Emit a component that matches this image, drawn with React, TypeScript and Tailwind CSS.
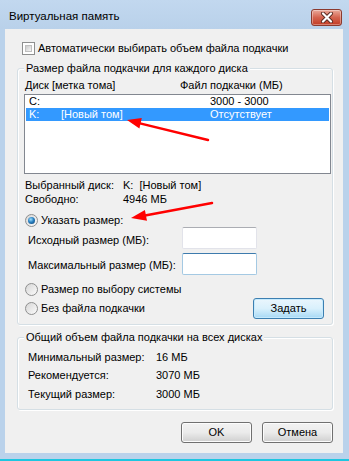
import React from "react";

function Radio({ checked }: { checked?: boolean }) {
  return (
    <span className="w-[13px] h-[13px] rounded-full border border-[#8e8f8f] bg-linear-to-br from-[#d6d6d6] to-[#fbfbfb] flex items-center justify-center shrink-0">
      {checked && (
        <span className="w-[7px] h-[7px] rounded-full bg-[radial-gradient(circle_at_40%_35%,#9fe0ff_0%,#2a80c0_45%,#0c3d6e_100%)]" />
      )}
    </span>
  );
}

function Checkbox() {
  return (
    <span className="w-[13px] h-[13px] border border-[#8e8f8f] bg-white p-[2px] shrink-0">
      <span className="block w-full h-full border border-[#c0c0c0] bg-linear-to-br from-[#cbcbcb] to-[#f6f6f6]" />
    </span>
  );
}

function Btn({ label, def }: { label: string; def?: boolean }) {
  return (
    <div
      className={
        "w-[71px] h-[21px] rounded-[3px] border flex items-center justify-center leading-none " +
        (def
          ? "border-[#3c7fb1] bg-linear-to-b from-[#eaf6fd] via-[#d9f0fc] to-[#a7d9f5] shadow-[inset_0_0_0_1px_#c6eafd]"
          : "border-[#707070] bg-linear-to-b from-[#f2f2f2] via-[#ebebeb] to-[#cfcfcf] shadow-[inset_0_0_0_1px_#fcfcfc]")
      }
    >
      {label}
    </div>
  );
}

function Input({ focused }: { focused?: boolean }) {
  return (
    <div
      className={
        "w-[75px] h-[22px] bg-white border rounded-[2px] " +
        (focused
          ? "border-[#a4c9e3] border-t-[#3d7bad]"
          : "border-[#e2e3ea] border-t-[#abadb3]")
      }
    />
  );
}

function CloseBtn() {
  return (
    <div className="mt-[9px] w-[31px] h-[17px] rounded-[3px] border border-[#8b3a2e] bg-linear-to-b from-[#e9a99b] via-[#d4634f] to-[#c23a22] flex items-center justify-center shadow-[inset_0_0_0_1px_rgba(255,255,255,0.35)]">
      <svg width="16" height="11" viewBox="0 0 16 11">
        <path d="M4 1.5 L12 9.5 M12 1.5 L4 9.5" stroke="#5a2a22" strokeWidth="4" strokeLinecap="round" />
        <path d="M4 1.5 L12 9.5 M12 1.5 L4 9.5" stroke="#ffffff" strokeWidth="2.2" strokeLinecap="round" />
      </svg>
    </div>
  );
}

function Group({
  title,
  className,
  children,
}: {
  title: string;
  className: string;
  children: React.ReactNode;
}) {
  return (
    <div
      className={
        "relative border border-[#d5dfe5] rounded-[3px] shadow-[inset_1px_1px_0_#ffffff,1px_1px_0_#ffffff] flex flex-col " +
        className
      }
    >
      <span className="absolute -top-[8px] left-[6px] px-[2px] bg-[#f0f0f0] leading-[14px]">
        {title}
      </span>
      {children}
    </div>
  );
}

export default function App() {
  return (
    <div className="relative w-[349px] h-[461px] bg-[#bad2eb] flex flex-col font-['Liberation_Sans',Arial,sans-serif] text-[11px] text-black overflow-hidden whitespace-nowrap">
      <div className="h-[29px] flex items-start justify-between pl-[9px] pr-[7px] bg-linear-to-b from-[#c2d8ef] to-[#b9d1ea]">
        <span className="mt-[8px] leading-[16px] text-[11.5px]">Виртуальная память</span>
        <CloseBtn />
      </div>

      <div className="ml-[5px] w-[338px] h-[424px] bg-[#f0f0f0] flex flex-col">
        <div className="mt-[12px] h-[14px] pl-[17px] flex items-center gap-[3px] leading-[14px]">
          <Checkbox />
          <span>Автоматически выбирать объем файла подкачки</span>
        </div>

        <Group title="Размер файла подкачки для каждого диска" className="mt-[13px] ml-[12px] w-[316px] h-[257px]">
          <div className="mt-[9px] h-[14px] pl-[7px] flex items-center leading-[14px]">
            <span className="w-[155px]">Диск [метка тома]</span>
            <span>Файл подкачки (МБ)</span>
          </div>
          <div className="mt-[2px] ml-[6px] w-[307px] h-[80px] bg-white border border-[#828790] flex flex-col">
            <div className="h-[13px] mx-[1px] pl-[3px] flex items-center leading-[13px]">
              <span className="w-[32px]">C:</span>
              <span className="w-[149px]"></span>
              <span>3000 - 3000</span>
            </div>
            <div className="h-[13px] mx-[1px] pl-[3px] flex items-center leading-[13px] bg-[#3399ff] text-white">
              <span className="w-[32px]">K:</span>
              <span className="w-[149px]">[Новый том]</span>
              <span>Отсутствует</span>
            </div>
          </div>

          <div className="mt-[4px] h-[14px] pl-[7px] flex items-center leading-[14px]">
            <span className="w-[98px]">Выбранный диск:</span>
            <span>K:&nbsp;&nbsp;[Новый том]</span>
          </div>
          <div className="h-[14px] pl-[7px] flex items-center leading-[14px]">
            <span className="w-[98px]">Свободно:</span>
            <span>4946 МБ</span>
          </div>

          <div className="mt-[7px] h-[14px] pl-[7px] flex items-center gap-[3px] leading-[14px]">
            <Radio checked />
            <span>Указать размер:</span>
          </div>
          <div className="h-[22px] pl-[10px] flex items-center leading-[14px]">
            <span className="w-[154px] pt-[4px]">Исходный размер (МБ):</span>
            <Input />
          </div>
          <div className="mt-[4px] h-[22px] pl-[10px] flex items-center leading-[14px]">
            <span className="w-[154px] pt-[2px]">Максимальный размер (МБ):</span>
            <Input focused />
          </div>

          <div className="mt-[7px] h-[14px] pl-[7px] flex items-center gap-[3px] leading-[14px]">
            <Radio />
            <span>Размер по выбору системы</span>
          </div>
          <div className="mt-[1px] h-[22px] pl-[7px] pr-[8px] flex items-center justify-between leading-[14px]">
            <div className="flex items-center gap-[3px]">
              <Radio />
              <span>Без файла подкачки</span>
            </div>
            <Btn label="Задать" def />
          </div>
        </Group>

        <Group title="Общий объем файла подкачки на всех дисках" className="mt-[12px] ml-[12px] w-[316px] h-[73px]">
          <div className="mt-[12px] h-[14px] pl-[10px] flex items-center leading-[14px]">
            <span className="w-[128px]">Минимальный размер:</span>
            <span>16 МБ</span>
          </div>
          <div className="mt-[4px] h-[14px] pl-[10px] flex items-center leading-[14px]">
            <span className="w-[128px]">Рекомендуется:</span>
            <span>3070 МБ</span>
          </div>
          <div className="mt-[5px] h-[14px] pl-[10px] flex items-center leading-[14px]">
            <span className="w-[128px]">Текущий размер:</span>
            <span>3000 МБ</span>
          </div>
        </Group>

        <div className="mt-[12px] pr-[10px] flex justify-end gap-[10px]">
          <Btn label="OK" />
          <Btn label="Отмена" />
        </div>
      </div>

      <div className="h-[6px]" />
      <div className="h-[2px] bg-[#1ec6e0]" />

      <svg className="absolute left-0 top-0 pointer-events-none" width="349" height="461" viewBox="0 0 349 461">
        <line x1="208" y1="140" x2="140" y2="123.4" stroke="#ff0000" strokeWidth="2.5" strokeLinecap="round" />
        <polygon points="127,120 141.8,118 139.4,128.6" fill="#ff0000" />
        <line x1="212" y1="203" x2="145" y2="215.5" stroke="#ff0000" strokeWidth="2.5" strokeLinecap="round" />
        <polygon points="131,218 147,220.8 144.9,210" fill="#ff0000" />
      </svg>
    </div>
  );
}
